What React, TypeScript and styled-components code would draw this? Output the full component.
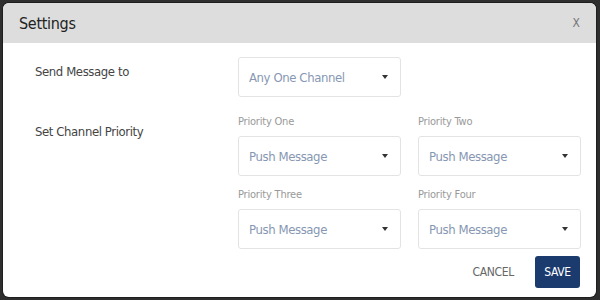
import styled, { createGlobalStyle } from "styled-components";

const GlobalStyle = createGlobalStyle`
  html, body {
    margin: 0;
    padding: 0;
    background: #2e2e2e;
  }
  body {
    font-family: "DejaVu Sans Condensed", "Liberation Sans", sans-serif;
  }
`;

const priorities = [
  { label: "Priority One", value: "Push Message" },
  { label: "Priority Two", value: "Push Message" },
  { label: "Priority Three", value: "Push Message" },
  { label: "Priority Four", value: "Push Message" },
];

function Caret() {
  return (
    <svg width="6" height="4" viewBox="0 0 6 4">
      <path d="M0 0 L6 0 L3 4 Z" fill="#333" />
    </svg>
  );
}

function Select({ value }: { value: string }) {
  return (
    <SelectBox>
      <span>{value}</span>
      <Caret />
    </SelectBox>
  );
}

export default function App() {
  return (
    <>
      <GlobalStyle />
      <Page>
        <Dialog>
          <Header>
            <Title>Settings</Title>
            <Close>x</Close>
          </Header>
          <Body>
            <Row>
              <RowLabel $center>Send Message to</RowLabel>
              <SendCol>
                <Select value="Any One Channel" />
              </SendCol>
            </Row>
            <Row $top={18}>
              <RowLabel $offset={9}>Set Channel Priority</RowLabel>
              <PriorityGrid>
                {priorities.map((p) => (
                  <Field key={p.label}>
                    <FieldLabel>{p.label}</FieldLabel>
                    <Select value={p.value} />
                  </Field>
                ))}
              </PriorityGrid>
            </Row>
          </Body>
          <Footer>
            <CancelButton>CANCEL</CancelButton>
            <SaveButton>SAVE</SaveButton>
          </Footer>
        </Dialog>
      </Page>
    </>
  );
}

const Page = styled.div`
  width: 600px;
  height: 300px;
  padding: 3px 4px 3px 3px;
  box-sizing: border-box;
`;

const Dialog = styled.div`
  height: 100%;
  background: #fff;
  border-radius: 6px;
  overflow: hidden;
  display: flex;
  flex-direction: column;
  box-shadow: 0 0 0 1px #1e1e1e;
`;

const Header = styled.div`
  height: 40px;
  flex-shrink: 0;
  background: #dddddd;
  display: flex;
  align-items: center;
  justify-content: space-between;
  padding: 0 16px 0 16px;
`;

const Title = styled.h1`
  margin: 0;
  font-size: 16px;
  letter-spacing: -0.3px;
  font-weight: 400;
  color: #222;
`;

const Close = styled.span`
  font-size: 12px;
  color: #777;
  text-transform: uppercase;
`;

const Body = styled.div`
  flex: 1;
  padding: 14px 16px 0 32px;
`;

const Row = styled.div<{ $top?: number }>`
  display: grid;
  grid-template-columns: 203px 1fr;
  margin-top: ${(p) => p.$top ?? 0}px;
`;

const RowLabel = styled.div<{ $center?: boolean; $offset?: number }>`
  font-size: 13px;
  letter-spacing: -0.4px;
  color: #444;
  align-self: ${(p) => (p.$center ? "center" : "start")};
  padding-top: ${(p) => p.$offset ?? 0}px;
  margin-top: ${(p) => (p.$center ? "-12px" : "0")};
`;

const SendCol = styled.div`
  width: 163px;
`;

const PriorityGrid = styled.div`
  display: grid;
  grid-template-columns: 163px 163px;
  column-gap: 17px;
  row-gap: 12px;
`;

const Field = styled.div`
  display: flex;
  flex-direction: column;
  gap: 7px;
`;

const FieldLabel = styled.div`
  font-size: 11px;
  letter-spacing: -0.2px;
  color: #999;
  line-height: 14px;
`;

const SelectBox = styled.div`
  height: 40px;
  box-sizing: border-box;
  border: 1px solid #e3e3e3;
  border-radius: 3px;
  display: flex;
  align-items: center;
  justify-content: space-between;
  padding: 0 12px 0 10px;
  font-size: 13px;
  letter-spacing: -0.4px;
  color: #8797b2;
`;

const Footer = styled.div`
  display: flex;
  justify-content: flex-end;
  align-items: center;
  gap: 21px;
  padding: 0 16px 9px 0;
`;

const CancelButton = styled.button`
  border: none;
  background: none;
  font-family: inherit;
  font-size: 12px;
  letter-spacing: -0.3px;
  color: #666;
  padding: 0;
`;

const SaveButton = styled.button`
  border: none;
  border-radius: 3px;
  background: #1b3a6d;
  color: #fff;
  font-family: inherit;
  font-size: 12px;
  letter-spacing: -0.3px;
  width: 45px;
  height: 32px;
  padding: 0;
`;
